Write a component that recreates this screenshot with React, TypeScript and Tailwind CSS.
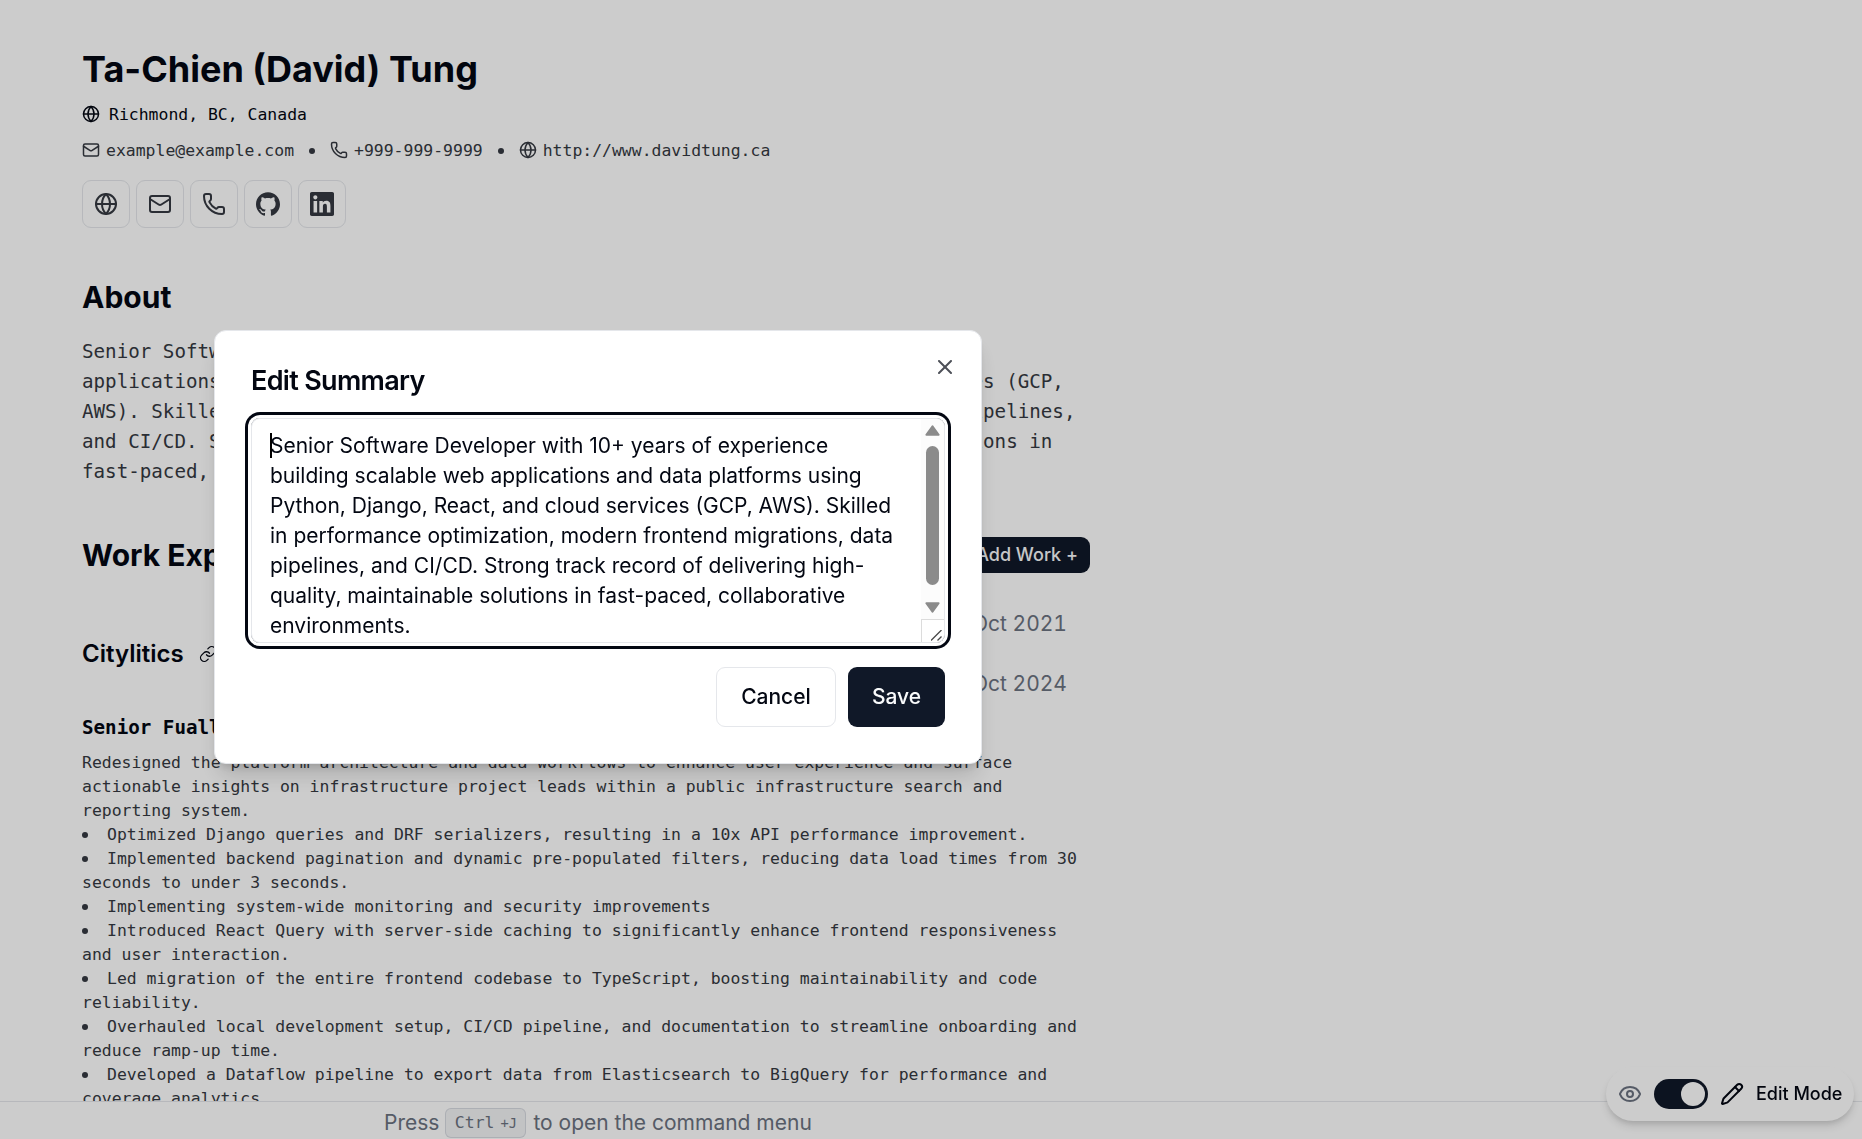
import React from "react";
import { Eye, Globe, Link, Mail, Pencil, Phone, X } from "lucide-react";

const mono = "font-['DejaVu_Sans_Mono',monospace]";

const aboutLines = [
  "Senior Software Developer with 10+ years of experience building scalable web",
  "applications and data platforms using Python, Django, React, and cloud services (GCP,",
  "AWS). Skilled in performance optimization, modern frontend migrations, data pipelines,",
  "and CI/CD. Strong track record of delivering high-quality, maintainable solutions in",
  "fast-paced, collaborative environments.",
];

const introLines = [
  "Redesigned the platform architecture and data workflows to enhance user experience and surface",
  "actionable insights on infrastructure project leads within a public infrastructure search and",
  "reporting system.",
];

const bullets = [
  ["Optimized Django queries and DRF serializers, resulting in a 10x API performance improvement."],
  ["Implemented backend pagination and dynamic pre-populated filters, reducing data load times from 30", "seconds to under 3 seconds."],
  ["Implementing system-wide monitoring and security improvements"],
  ["Introduced React Query with server-side caching to significantly enhance frontend responsiveness", "and user interaction."],
  ["Led migration of the entire frontend codebase to TypeScript, boosting maintainability and code", "reliability."],
  ["Overhauled local development setup, CI/CD pipeline, and documentation to streamline onboarding and", "reduce ramp-up time."],
  ["Developed a Dataflow pipeline to export data from Elasticsearch to BigQuery for performance and", "coverage analytics."],
];

const summaryLines = [
  "Senior Software Developer with 10+ years of experience",
  "building scalable web applications and data platforms using",
  "Python, Django, React, and cloud services (GCP, AWS). Skilled",
  "in performance optimization, modern frontend migrations, data",
  "pipelines, and CI/CD. Strong track record of delivering high-",
  "quality, maintainable solutions in fast-paced, collaborative",
  "environments.",
];

function GithubMark() {
  return (
    <svg viewBox="0 0 24 24" className="size-6" fill="currentColor">
      <path d="M12 .297c-6.63 0-12 5.373-12 12 0 5.303 3.438 9.8 8.205 11.385.6.113.82-.258.82-.577 0-.285-.01-1.04-.015-2.04-3.338.724-4.042-1.61-4.042-1.61C4.422 18.07 3.633 17.7 3.633 17.7c-1.087-.744.084-.729.084-.729 1.205.084 1.838 1.236 1.838 1.236 1.07 1.835 2.809 1.305 3.495.998.108-.776.417-1.305.76-1.605-2.665-.3-5.466-1.332-5.466-5.93 0-1.31.465-2.38 1.235-3.22-.135-.303-.54-1.523.105-3.176 0 0 1.005-.322 3.3 1.23.96-.267 1.98-.399 3-.405 1.02.006 2.04.138 3 .405 2.28-1.552 3.285-1.23 3.285-1.23.645 1.653.24 2.873.12 3.176.765.84 1.23 1.91 1.23 3.22 0 4.61-2.805 5.625-5.475 5.92.42.36.81 1.096.81 2.22 0 1.606-.015 2.896-.015 3.286 0 .315.21.69.825.57C20.565 22.092 24 17.592 24 12.297c0-6.627-5.373-12-12-12" />
    </svg>
  );
}

function LinkedinMark() {
  return (
    <svg viewBox="0 0 24 24" className="size-6" fill="currentColor">
      <path d="M20.447 20.452h-3.554v-5.569c0-1.328-.027-3.037-1.852-3.037-1.853 0-2.136 1.445-2.136 2.939v5.667H9.351V9h3.414v1.561h.046c.477-.9 1.637-1.85 3.37-1.85 3.601 0 4.267 2.37 4.267 5.455v6.286zM5.337 7.433c-1.144 0-2.063-.926-2.063-2.065 0-1.138.92-2.063 2.063-2.063 1.14 0 2.064.925 2.064 2.063 0 1.139-.925 2.065-2.064 2.065zm1.782 13.019H3.555V9h3.564v11.452zM22.225 0H1.771C.792 0 0 .774 0 1.729v20.542C0 23.227.792 24 1.771 24h20.451C23.2 24 24 23.227 24 22.271V1.729C24 .774 23.2 0 22.222 0h.003z" />
    </svg>
  );
}

function Dot() {
  return <span className="mx-[15px] mt-0.5 size-1.5 rounded-full bg-[#353941]" />;
}

function SocialButton({ children }: { children: React.ReactNode }) {
  return (
    <div className="flex size-12 items-center justify-center rounded-[9px] border border-gray-200 text-[#353941]">
      {children}
    </div>
  );
}

function Resume() {
  return (
    <main className="ml-[82px] w-[1008px] whitespace-pre pt-[47px] text-gray-950">
      <h1 className="text-[36px] font-bold leading-[45px]">Ta-Chien (David) Tung</h1>
      <div className={`${mono} mt-[10px] flex h-6 items-center gap-[9px] text-[16.44px] leading-6`}>
        <Globe size={18} />
        <span className="pt-0.5">Richmond, BC, Canada</span>
      </div>
      <div className={`${mono} mt-3 flex h-6 items-center text-[16.44px] leading-6 text-[#353941]`}>
        <Mail size={18} className="mr-1.5" />
        <span className="pt-0.5">example@example.com</span>
        <Dot />
        <Phone size={18} className="mr-1.5" />
        <span className="pt-0.5">+999-999-9999</span>
        <Dot />
        <Globe size={18} className="mr-1.5" />
        <span className="pt-0.5">http://www.davidtung.ca</span>
      </div>
      <div className="mt-[18px] flex gap-1.5">
        <SocialButton><Globe size={24} /></SocialButton>
        <SocialButton><Mail size={24} /></SocialButton>
        <SocialButton><Phone size={24} /></SocialButton>
        <SocialButton><GithubMark /></SocialButton>
        <SocialButton><LinkedinMark /></SocialButton>
      </div>

      <h2 className="mt-[54px] text-[30px] font-bold leading-[30px]">About</h2>
      <div className={`${mono} mt-[25px] text-[19.19px] leading-[30px] text-[#353941]`}>
        {aboutLines.map((line) => (
          <div key={line}>{line}</div>
        ))}
      </div>

      <div className="mt-[50px] flex h-9 items-center justify-between">
        <h2 className="text-[30px] font-bold leading-[30px]">Work Experience</h2>
        <button className="h-9 rounded-[9px] bg-gray-900 px-3 text-[18px] font-medium leading-9 text-gray-50">Add Work +</button>
      </div>

      <div className="mt-9 flex h-[90px] items-center justify-between pr-[23px]">
        <div className="flex items-center gap-[15px]">
          <h3 className="text-[24px] font-semibold leading-9">Citylitics</h3>
          <Link size={18} strokeWidth={1.7} />
        </div>
        <div className="text-right text-[21px] leading-[30px] tabular-nums text-[#6b7280]">
          <div>Oct 2021</div>
          <div className="h-[30px]" />
          <div>Oct 2024</div>
        </div>
      </div>

      <h4 className={`${mono} mt-3.5 text-[19.19px] font-bold leading-[30px]`}>Senior Fuall Stack Developer</h4>
      <div className={`${mono} mt-2 text-[16.45px] leading-6 text-[#353941]`}>
        {introLines.map((line) => (
          <div key={line}>{line}</div>
        ))}
        <ul>
          {bullets.map(([first, ...rest]) => (
            <li key={first}>
              <div className="flex items-center">
                <span className="mr-[19px] size-1.5 shrink-0 rounded-full bg-[#353941]" />
                {first}
              </div>
              {rest.map((line) => (
                <div key={line}>{line}</div>
              ))}
            </li>
          ))}
        </ul>
      </div>
    </main>
  );
}

function CommandBar() {
  return (
    <footer className="fixed inset-x-0 bottom-0 flex h-[38px] items-center whitespace-pre border-t border-gray-200 bg-white pl-[384px] pt-[5px] text-[21px] text-[#6b7280]">
      <span>Press</span>
      <kbd className={`${mono} ml-1.5 mr-[7px] flex h-[30px] w-[81px] items-center justify-center gap-1.5 rounded-md border border-gray-300/80 bg-gray-100 pt-px text-[16.44px]`}>
        <span>Ctrl</span>
        <span className="text-[13.7px]">+J</span>
      </kbd>
      <span>to open the command menu</span>
    </footer>
  );
}

function ModeSwitch() {
  return (
    <div className="fixed bottom-[18px] right-2 flex h-[54px] w-[248px] items-center gap-3 rounded-full bg-white px-3 shadow-[0_6px_9px_-1px_rgba(0,0,0,0.12),0_3px_6px_-2px_rgba(0,0,0,0.12)]">
      <Eye size={24} className="shrink-0 text-[#6b7280]" />
      <div className="flex h-[30px] w-[54px] shrink-0 items-center justify-end rounded-full bg-gray-900 px-[3px]">
        <div className="size-6 rounded-full bg-white" />
      </div>
      <Pencil size={24} className="shrink-0 text-gray-950" />
      <span className="whitespace-nowrap pb-px text-[18px] font-medium leading-6 text-gray-950">Edit Mode</span>
    </div>
  );
}

function Scrollbar() {
  return (
    <div className="flex w-[23px] shrink-0 flex-col">
      <div className="flex flex-1 flex-col items-center bg-[#fcfcfc] pt-1.5">
        <svg width="15" height="11" viewBox="0 0 15 11" fill="#8b8b8b" stroke="#8b8b8b" strokeWidth="2" strokeLinejoin="round">
          <path d="M7.5 1.3 13.6 9.8H1.4Z" />
        </svg>
        <div className="mt-[10px] h-[139px] w-[13px] rounded-full bg-[#8b8b8b]" />
        <svg className="mt-[17px]" width="15" height="11" viewBox="0 0 15 11" fill="#8b8b8b" stroke="#8b8b8b" strokeWidth="2" strokeLinejoin="round">
          <path d="M7.5 9.7 1.4 1.2H13.6Z" />
        </svg>
      </div>
      <div className="flex h-[23px] items-end justify-end rounded-br-[8px] border-l border-t border-[#dcdcdc] bg-white pb-px pr-0.5">
        <svg width="11" height="11" viewBox="0 0 11 11" stroke="#4a4a4a" strokeWidth="1.3">
          <path d="M0 10.5 10.5 0M6.5 10.5 10.5 6.5" />
        </svg>
      </div>
    </div>
  );
}

function SummaryDialog() {
  return (
    <div className="fixed left-[214px] top-[330px] flex h-[434px] w-[768px] flex-col rounded-xl border border-gray-200 bg-white px-9 text-gray-950 shadow-[0_15px_22px_-5px_rgba(0,0,0,0.16),0_6px_9px_-4px_rgba(0,0,0,0.14)]">
      <X size={24} className="absolute right-6 top-6 opacity-70" />
      <h2 className="mt-[36px] text-[27px] font-semibold leading-[27px] tracking-tight">Edit Summary</h2>
      <div className="mt-[24px] flex h-[225px] overflow-hidden whitespace-pre rounded-[9px] border border-gray-200 ring-3 ring-gray-950 ring-offset-3">
        <div className="relative flex-1 pl-[18px] pt-3 text-[21px] leading-[30px]">
          <span className="absolute left-[18px] top-[14px] h-[25px] w-[1.5px] bg-black" />
          {summaryLines.map((line) => (
            <div key={line}>{line}</div>
          ))}
        </div>
        <Scrollbar />
      </div>
      <div className="mt-6 flex justify-end gap-3 text-[21px] font-medium">
        <button className="h-[60px] w-[120px] rounded-[9px] border border-gray-200">Cancel</button>
        <button className="h-[60px] w-[97px] rounded-[9px] bg-gray-900 text-gray-50">Save</button>
      </div>
    </div>
  );
}

export default function App() {
  return (
    <div className="h-screen w-full overflow-hidden bg-white font-['Inter',sans-serif]">
      <Resume />
      <CommandBar />
      <ModeSwitch />
      <div className="fixed inset-0 bg-black/20" />
      <SummaryDialog />
    </div>
  );
}
